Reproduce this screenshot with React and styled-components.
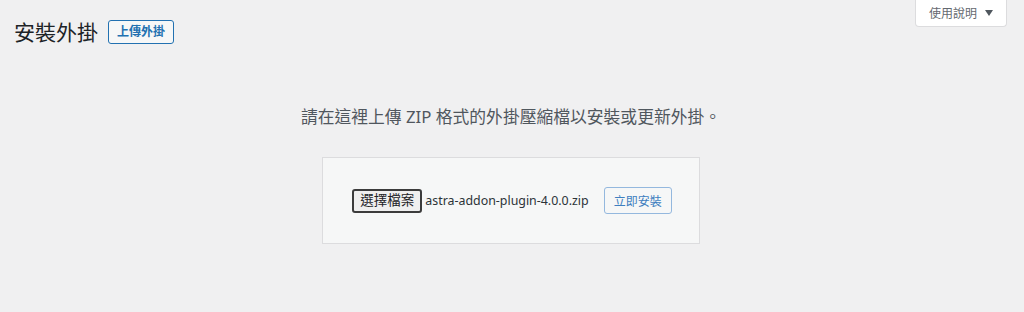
import React from 'react';
import styled, { createGlobalStyle } from 'styled-components';

const GlobalStyle = createGlobalStyle`
  html, body {
    margin: 0;
    padding: 0;
    background: #f0f0f1;
  }
  body {
    font-family: "Noto Sans", "Noto Sans CJK TC", sans-serif;
    color: #3c434a;
  }
`;

const Page = styled.div`
  padding: 0 17px 0 14px;
  height: 312px;
  box-sizing: border-box;
`;

const Header = styled.div`
  display: flex;
  justify-content: space-between;
  align-items: flex-start;
`;

const TitleRow = styled.div`
  display: flex;
  align-items: center;
  gap: 10px;
  padding-top: 20px;
`;

const Title = styled.h1`
  margin: 0;
  font-size: 21px;
  line-height: 24px;
  font-weight: 400;
  color: #1d2327;
`;

const ActionButton = styled.button`
  font-family: inherit;
  font-size: 12px;
  font-weight: 600;
  line-height: 22px;
  height: 24px;
  padding: 0 8px;
  border: 1px solid #2271b1;
  border-radius: 3px;
  background: #f6f7f7;
  color: #2271b1;
  cursor: pointer;
`;

const HelpTab = styled.button`
  display: flex;
  align-items: center;
  justify-content: center;
  gap: 8px;
  width: 92px;
  height: 27px;
  padding: 0;
  font-family: inherit;
  font-size: 12px;
  color: #646970;
  background: #fff;
  border: 1px solid #dcdcde;
  border-top: none;
  border-radius: 0 0 4px 4px;
  cursor: pointer;
`;

const Caret = styled.span`
  width: 0;
  height: 0;
  border-left: 4px solid transparent;
  border-right: 4px solid transparent;
  border-top: 6px solid #50575e;
`;

const UploadSection = styled.div`
  text-align: center;
  padding-left: 1px;
`;

const Help = styled.p`
  margin: 60px 0 0;
  font-size: 16.8px;
  line-height: 26px;
  color: #50575e;
`;

const UploadForm = styled.form`
  display: inline-flex;
  align-items: center;
  margin-top: 27px;
  padding: 29px 27px 29px 29px;
  background: #f6f7f7;
  border: 1px solid #dcdcde;
`;

const FileButton = styled.button`
  font-family: inherit;
  font-size: 13.5px;
  line-height: 19px;
  height: 24px;
  padding: 0 6px;
  border: 2px solid #3c3c3c;
  border-radius: 3px;
  background: #efefef;
  color: #1d2327;
`;

const FileName = styled.span`
  margin-left: 3px;
  font-size: 12.4px;
  color: #2c3338;
`;

const InstallButton = styled.button`
  margin-left: 15px;
  font-family: inherit;
  font-size: 12px;
  height: 27px;
  padding: 0 9px;
  border: 1px solid #94b8de;
  border-radius: 3px;
  background: #f6f7f7;
  color: #3f7fc0;
`;

export default function App() {
  return (
    <>
      <GlobalStyle />
      <Page>
        <Header>
          <TitleRow>
            <Title>安裝外掛</Title>
            <ActionButton>上傳外掛</ActionButton>
          </TitleRow>
          <HelpTab>
            使用說明
            <Caret />
          </HelpTab>
        </Header>
        <UploadSection>
          <Help>請在這裡上傳 ZIP 格式的外掛壓縮檔以安裝或更新外掛。</Help>
          <UploadForm onSubmit={(e) => e.preventDefault()}>
            <FileButton type="button">選擇檔案</FileButton>
            <FileName>astra-addon-plugin-4.0.0.zip</FileName>
            <InstallButton type="button" disabled>立即安裝</InstallButton>
          </UploadForm>
        </UploadSection>
      </Page>
    </>
  );
}
